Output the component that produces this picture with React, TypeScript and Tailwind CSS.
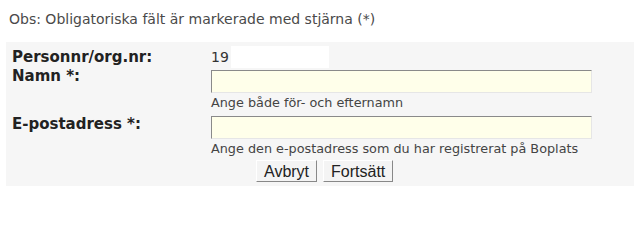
export default function App() {
  return (
    <div className="w-[644px] h-[203px] bg-white pt-[11px] font-['DejaVu_Sans',Verdana,sans-serif] text-[#333]">
      <p className="pl-[9px] text-[14px] leading-[17px] text-[#4a4a4a]">
        Obs: Obligatoriska fält är markerade med stjärna (*)
      </p>
      <div className="mx-[6px] mt-[14px] w-[628px] h-[144px] bg-[#f6f6f6] pl-[6px] pt-[5px]">
        <div className="flex items-center h-[20px]">
          <div className="w-[199px] text-[15px] font-bold text-[#222]">Personnr/org.nr:</div>
          <div className="flex items-center text-[14px] text-[#333]">
            19
            <span className="ml-[2px] inline-block w-[98px] h-[22px] bg-white" />
          </div>
        </div>
        <div className="flex">
          <div className="w-[199px] text-[15px] leading-[19px] font-bold text-[#222]">Namn *:</div>
          <div className="flex flex-col">
            <input
              className="mt-[3px] w-[381px] h-[23px] bg-[#ffffea] border border-t-[#8a8a8a] border-l-[#8a8a8a] border-r-[#e6e6e6] border-b-[#e6e6e6] outline-none"
              readOnly
            />
            <span className="mt-[2px] text-[12.8px] leading-[15px] text-[#444]">Ange både för- och efternamn</span>
          </div>
        </div>
        <div className="flex mt-[6px]">
          <div className="w-[199px] text-[15px] leading-[17px] font-bold text-[#222]">E-postadress *:</div>
          <div className="flex flex-col">
            <input
              className="w-[381px] h-[23px] bg-[#ffffea] border border-t-[#8a8a8a] border-l-[#8a8a8a] border-r-[#e6e6e6] border-b-[#e6e6e6] outline-none"
              readOnly
            />
            <span className="mt-[2px] text-[12.8px] leading-[15px] text-[#444]">
              Ange den e-postadress som du har registrerat på Boplats
            </span>
          </div>
        </div>
        <div className="flex gap-[6px] pl-[244px] mt-[4px]">
          <button className="h-[22px] px-[7px] bg-[#f4f4f4] border border-t-white border-l-white border-r-[#888] border-b-[#888] font-['Liberation_Sans',Arial,sans-serif] text-[16px] leading-[19px] text-[#222]">
            Avbryt
          </button>
          <button className="h-[22px] px-[7px] bg-[#f4f4f4] border border-t-white border-l-white border-r-[#888] border-b-[#888] font-['Liberation_Sans',Arial,sans-serif] text-[16px] leading-[19px] text-[#222]">
            Fortsätt
          </button>
        </div>
      </div>
    </div>
  );
}
